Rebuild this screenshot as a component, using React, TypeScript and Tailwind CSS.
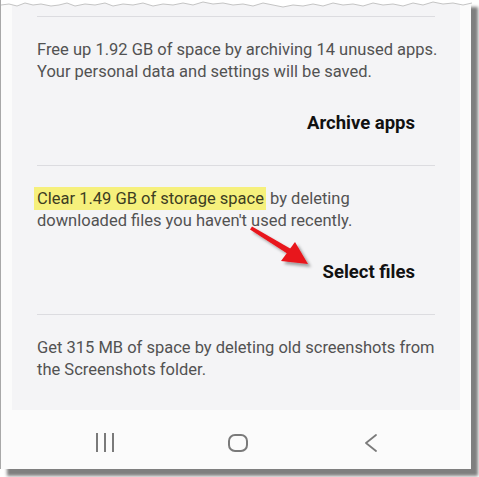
import React from "react";

function Section({
  children,
  action,
  first,
}: {
  children: React.ReactNode;
  action?: string;
  first?: boolean;
}) {
  return (
    <section className={`border-t border-[#dcdce0] pt-[22px] pb-[29px] ${first ? "mt-[16px]" : ""}`}>
      <p className="-mr-[12px] text-[16.5px] leading-[22px] text-[#525252]">{children}</p>
      {action && (
        <div className="flex justify-end pr-[20px] mt-[28px]">
          <span className="text-[18.5px] leading-[25px] font-bold text-[#111]">{action}</span>
        </div>
      )}
    </section>
  );
}

export default function App() {
  return (
    <div className="min-h-screen bg-white font-['Roboto','Liberation_Sans',sans-serif]">
      <div className="relative w-[471px] h-[469px] border-l border-[#a8a8a8] bg-[#fbfbfb] shadow-[7px_7px_3px_rgba(0,0,0,0.5)] flex flex-col">
        <div className="mx-[11px] h-[410px] shrink-0 bg-[#f4f4f6] px-[25px] overflow-hidden">
          <Section first action="Archive apps">
            Free up 1.92 GB of space by archiving 14 unused apps.
            <br />
            Your personal data and settings will be saved.
          </Section>
          <Section action="Select files">
            <span className="bg-[#f6f07c] text-[#3d3d22] pl-[3px] -ml-[3px] pr-[2px] py-[2px]">Clear 1.49 GB of storage space</span> by deleting
            <br />
            downloaded files you haven't used recently.
          </Section>
          <Section>
            Get 315 MB of space by deleting old screenshots from
            <br />
            the Screenshots folder.
          </Section>
        </div>

        <nav className="flex-1 flex items-center pt-[6px] pl-[95px]">
          <div className="flex gap-[6px] h-[19px]">
            <span className="w-[2px] bg-[#7a7a7a]" />
            <span className="w-[2px] bg-[#7a7a7a]" />
            <span className="w-[2px] bg-[#7a7a7a]" />
          </div>
          <div className="ml-[114px] w-[20px] h-[18px] rounded-[7px] border-[2px] border-[#7a7a7a]" />
          <svg className="ml-[116px]" width="14" height="18" viewBox="0 0 14 18" fill="none">
            <path d="M12 1 L2 9 L12 17" stroke="#7a7a7a" strokeWidth="1.8" strokeLinecap="round" strokeLinejoin="round" />
          </svg>
        </nav>

        {/* torn top edge */}
        <svg className="absolute left-0 top-0" width="471" height="10" viewBox="0 0 471 10">
          <path
            d="M0 0 L0 5 L8 4 L16 6 L24 3 L32 5 L40 4 L50 6 L58 5 L66 3 L74 6 L84 4 L94 5 L104 3 L112 6 L122 4 L132 5 L142 3 L152 6 L162 4 L172 5 L182 3 L192 5 L202 2 L212 4 L222 3 L232 5 L242 4 L252 6 L262 3 L272 5 L282 7 L292 5 L302 6 L312 4 L322 6 L332 3 L342 5 L352 4 L362 6 L372 3 L382 5 L392 4 L402 6 L412 3 L422 5 L432 2 L442 4 L452 3 L462 5 L471 3 L471 0 Z"
            fill="#ffffff"
          />
          <path
            d="M0 5 L8 4 L16 6 L24 3 L32 5 L40 4 L50 6 L58 5 L66 3 L74 6 L84 4 L94 5 L104 3 L112 6 L122 4 L132 5 L142 3 L152 6 L162 4 L172 5 L182 3 L192 5 L202 2 L212 4 L222 3 L232 5 L242 4 L252 6 L262 3 L272 5 L282 7 L292 5 L302 6 L312 4 L322 6 L332 3 L342 5 L352 4 L362 6 L372 3 L382 5 L392 4 L402 6 L412 3 L422 5 L432 2 L442 4 L452 3 L462 5 L471 3"
            fill="none"
            stroke="#c4c4c4"
            strokeWidth="1"
          />
        </svg>

        {/* red arrow */}
        <svg className="absolute left-0 top-0 pointer-events-none" width="471" height="469" viewBox="0 0 471 469">
          <defs>
            <filter id="sh" x="-20%" y="-20%" width="150%" height="150%">
              <feDropShadow dx="3" dy="3" stdDeviation="1.5" floodColor="#000" floodOpacity="0.35" />
            </filter>
          </defs>
          <g filter="url(#sh)">
            <polygon points="249,229.5 251,226.5 290,249 287,254" fill="#e8141b" />
            <polygon points="307,264 280,261 294,242" fill="#e8141b" />
          </g>
        </svg>
      </div>
    </div>
  );
}
